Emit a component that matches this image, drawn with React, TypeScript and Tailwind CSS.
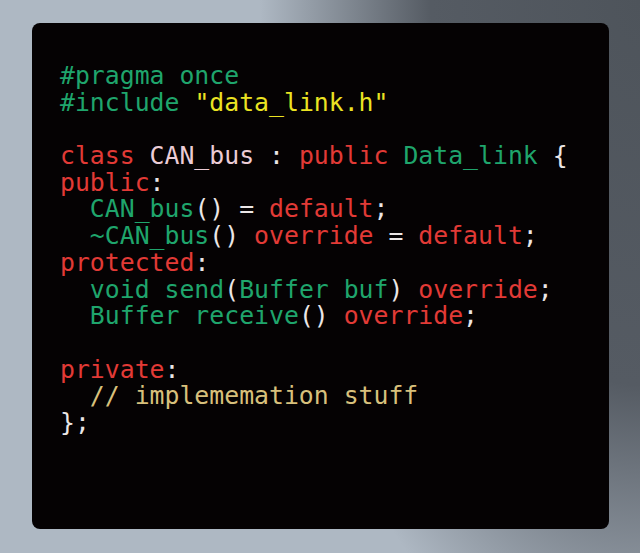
import React from "react";

const G = "text-[#1fa56c]";
const R = "text-[#e23a36]";
const W = "text-[#ebe6e6]";
const P = "text-[#ecccd6]";
const Y = "text-[#ebe322]";
const C = "text-[#d8c07c]";

type Tok = [string, string];

const lines: Tok[][] = [
  [[G, "#pragma once"]],
  [[G, "#include "], [Y, '"data_link.h"']],
  [],
  [[R, "class"], [P, " CAN_bus"], [W, " :"], [R, " public"], [G, " Data_link"], [W, " {"]],
  [[R, "public"], [W, ":"]],
  [[G, "  CAN_bus"], [W, "() = "], [R, "default"], [W, ";"]],
  [[G, "  ~CAN_bus"], [W, "()"], [R, " override"], [W, " = "], [R, "default"], [W, ";"]],
  [[R, "protected"], [W, ":"]],
  [[G, "  void send"], [W, "("], [G, "Buffer buf"], [W, ")"], [R, " override"], [W, ";"]],
  [[G, "  Buffer receive"], [W, "()"], [R, " override"], [W, ";"]],
  [],
  [[R, "private"], [W, ":"]],
  [[C, "  // implememation stuff"]],
  [[W, "};"]],
];

export default function App() {
  return (
    <div className="w-[640px] h-[553px] bg-[#aeb8c3] bg-[radial-gradient(ellipse_380px_700px_at_100%_0%,#4e545b_0%,#555b63_55%,rgba(174,184,195,0)_100%)] pt-[23px] pl-[32px] overflow-hidden">
      <div className="w-[577px] h-[506px] rounded-lg bg-[#050203] pl-[28px] pt-[40px]">
        <pre
          className="text-[24.8px] leading-[26.7px]"
          style={{ fontFamily: '"DejaVu Sans Mono", monospace' }}
        >
          {lines.map((line, i) => (
            <div key={i} className="h-[26.7px]">
              {line.map(([cls, txt], j) => (
                <span key={j} className={cls}>
                  {txt}
                </span>
              ))}
            </div>
          ))}
        </pre>
      </div>
    </div>
  );
}
